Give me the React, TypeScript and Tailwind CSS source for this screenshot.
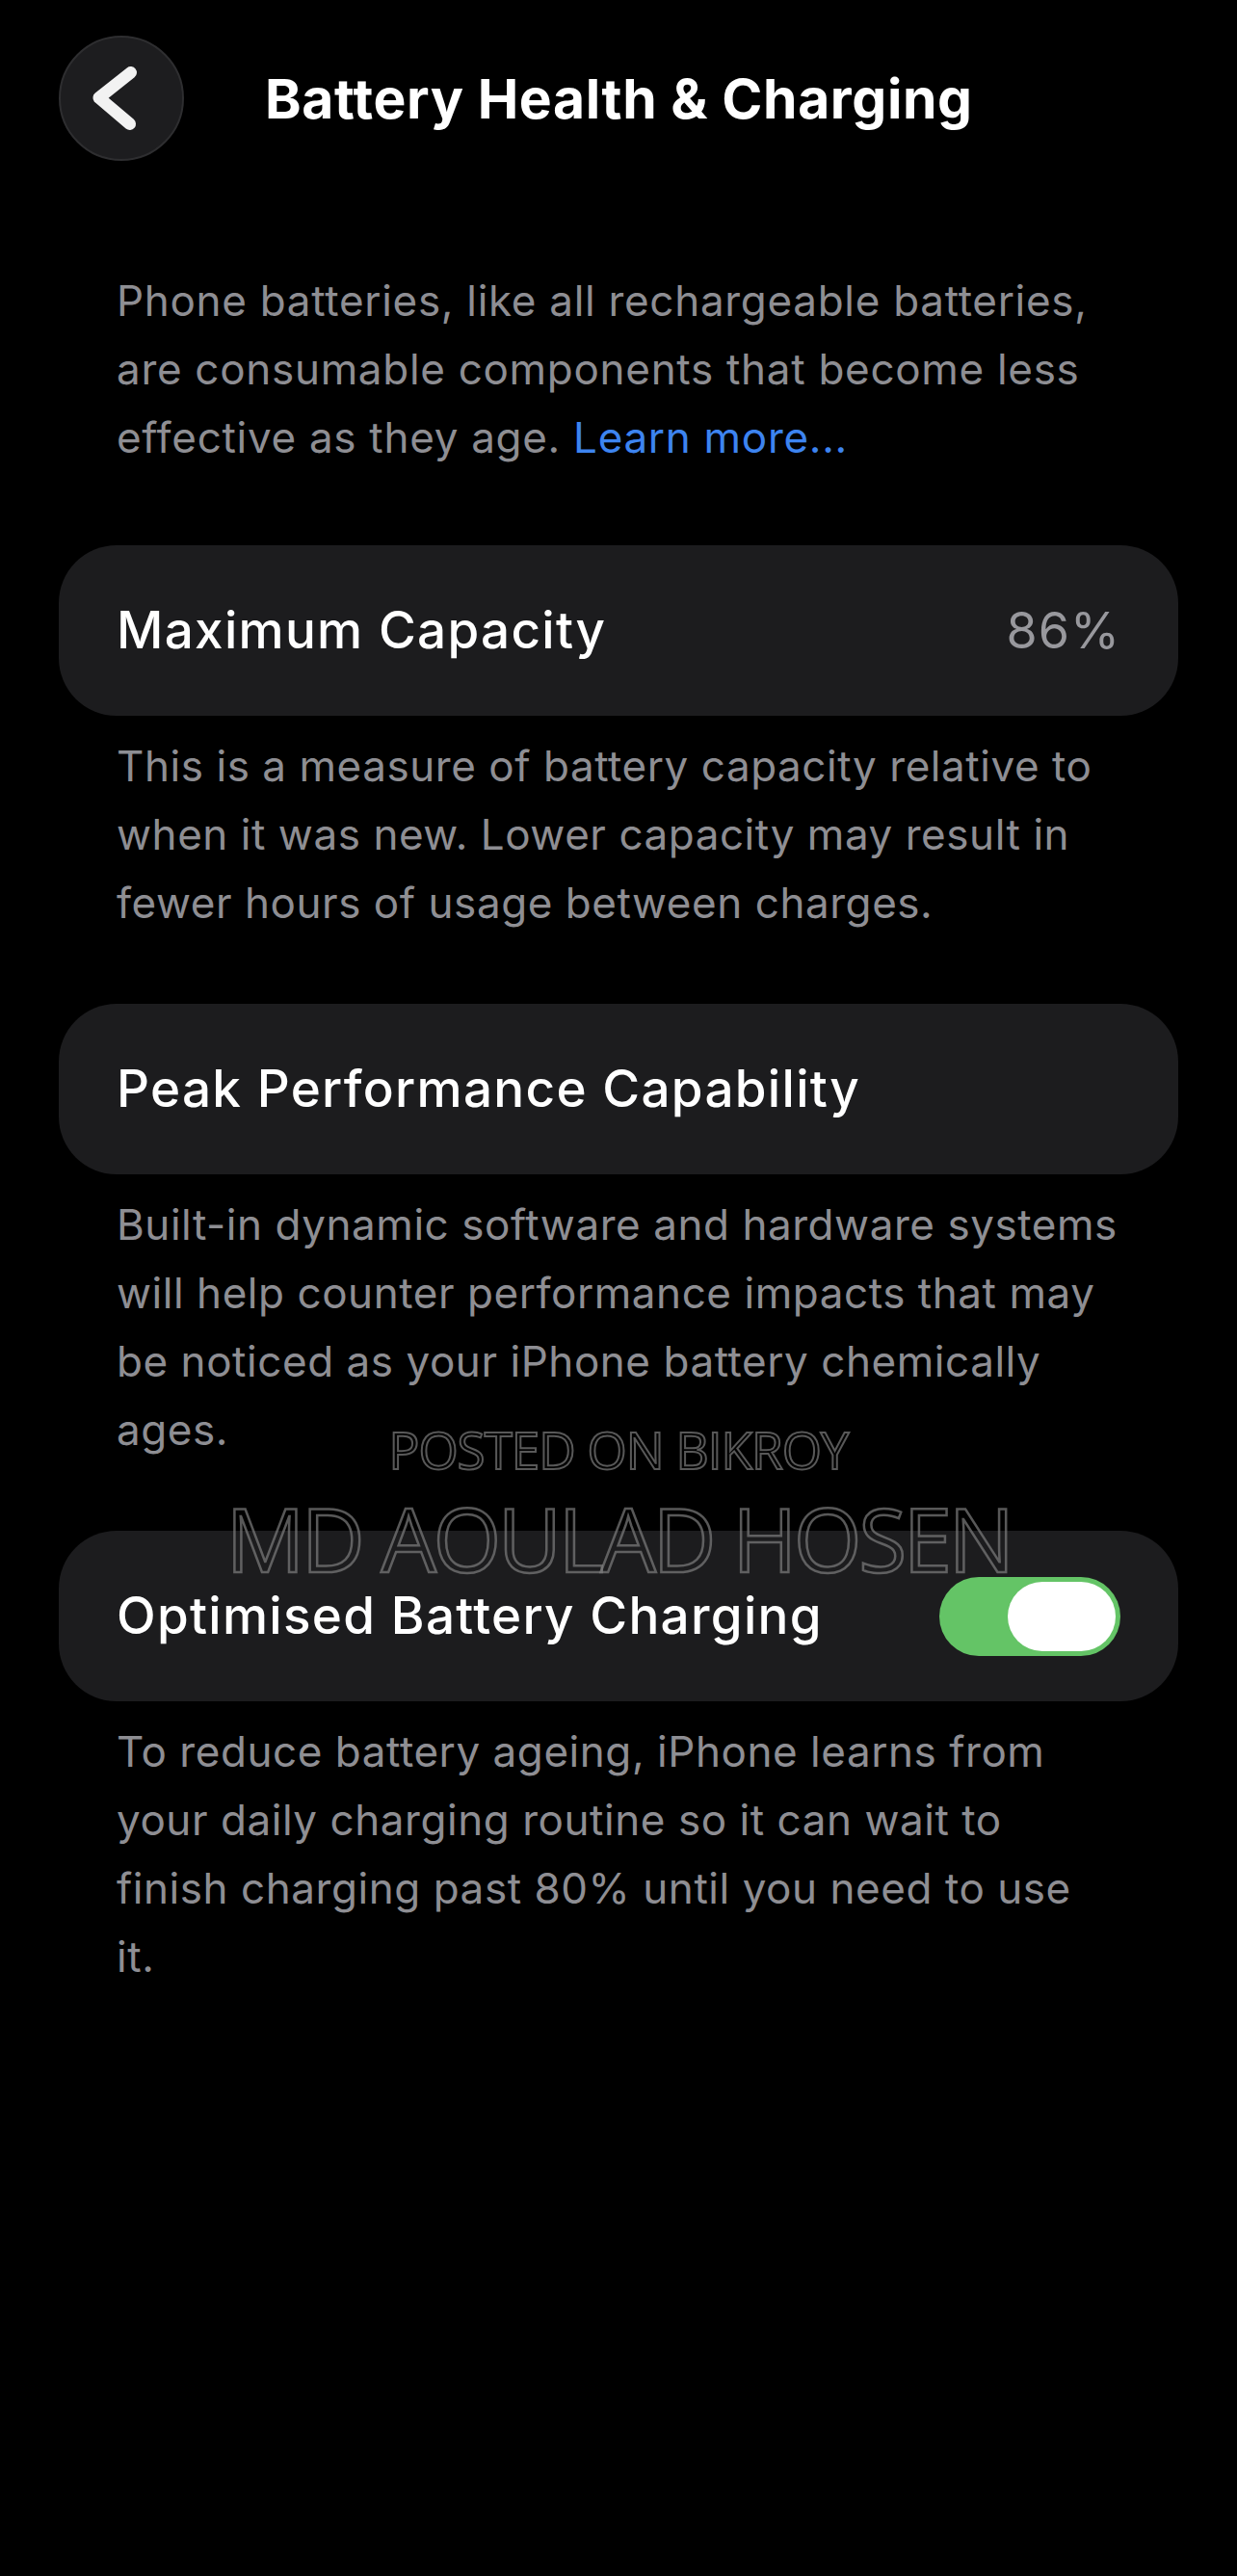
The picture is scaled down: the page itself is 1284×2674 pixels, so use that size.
const SECTIONS = [
  {
    label: 'Maximum Capacity',
    value: '86%',
    toggle: false,
    footer: [
      'This is a measure of battery capacity relative to',
      'when it was new. Lower capacity may result in',
      'fewer hours of usage between charges.',
    ],
  },
  {
    label: 'Peak Performance Capability',
    value: '',
    toggle: false,
    footer: [
      'Built-in dynamic software and hardware systems',
      'will help counter performance impacts that may',
      'be noticed as your iPhone battery chemically',
      'ages.',
    ],
  },
  {
    label: 'Optimised Battery Charging',
    value: '',
    toggle: true,
    footer: [
      'To reduce battery ageing, iPhone learns from',
      'your daily charging routine so it can wait to',
      'finish charging past 80% until you need to use',
      'it.',
    ],
  },
];

function Lines({ lines }: { lines: string[] }) {
  return (
    <>
      {lines.map((l, i) => (
        <span key={i} className="block whitespace-nowrap">
          {l}
        </span>
      ))}
    </>
  );
}

function Toggle() {
  return (
    <div className="w-[188px] h-[82px] rounded-full bg-[#64c466] flex items-center justify-end pr-[5px]">
      <div className="w-[112px] h-[72px] rounded-full bg-white" />
    </div>
  );
}

export default function App() {
  return (
    <div className="relative min-h-[2674px] w-full bg-black font-['Inter','Noto_Sans',sans-serif] antialiased">
      {/* Nav */}
      <div className="flex items-center pt-[37px] pl-[61px]">
        <button className="w-[130px] h-[130px] rounded-full bg-[#1d1d1f] border-2 border-[#2e2e30] flex items-center justify-center">
          <svg width="130" height="130" viewBox="0 0 130 130" fill="none">
            <path d="M75 37.5 L41 64.5 L74 92.5" stroke="#f2f2f2" strokeWidth="13" strokeLinecap="round" strokeLinejoin="round" />
          </svg>
        </button>
        <h1 className="ml-[84px] text-[57px] leading-none font-bold tracking-[0.6px] text-white">
          Battery Health &amp; Charging
        </h1>
      </div>

      <div className="px-[61px] pt-[110px]">
        <p className="pl-[60px] text-[44px] leading-[71px] tracking-[0.7px] text-[#8e8e93]">
          Phone batteries, like all rechargeable batteries,
          <br />
          are consumable components that become less
          <br />
          effective as they age. <span className="text-[#3d84f0]">Learn more...</span>
        </p>

        <div className="mt-[76px] flex flex-col gap-[69px]">
          {SECTIONS.map(s => (
            <div key={s.label} className="flex flex-col gap-[17px]">
              <div className="h-[177px] rounded-[60px] bg-[#1c1c1e] flex items-center justify-between pl-[60px] pr-[60px]">
                <span className="text-[53px] leading-none font-medium tracking-[1.3px] text-white">{s.label}</span>
                {s.value && <span className="text-[52px] leading-none tracking-[1px] text-[#98989d]">{s.value}</span>}
                {s.toggle && <Toggle />}
              </div>
              <p className="pl-[60px] text-[44px] leading-[71px] tracking-[0.55px] text-[#8e8e93]">
                <Lines lines={s.footer} />
              </p>
            </div>
          ))}
        </div>
      </div>

      {/* watermark */}
      <div className="pointer-events-none absolute left-0 right-0 top-[1478px] flex flex-col items-center font-['Open_Sans',sans-serif] text-transparent">
        <span className="text-[53px] leading-none tracking-[-1px] [-webkit-text-stroke:2px_rgba(125,125,125,0.7)]">POSTED ON BIKROY</span>
        <span className="mt-[21px] text-[91px] leading-none tracking-[-3.5px] [-webkit-text-stroke:2.5px_rgba(125,125,125,0.7)]">MD AOULAD HOSEN</span>
      </div>
    </div>
  );
}
